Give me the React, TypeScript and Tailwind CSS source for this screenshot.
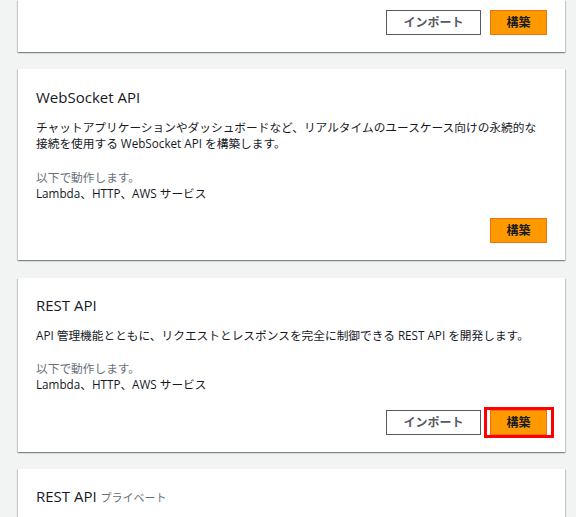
import React from "react";

const font = { fontFamily: '"Open Sans", "Noto Sans CJK JP", sans-serif' };
const cardShadow =
  "bg-white shadow-[0_1px_1px_0_rgba(0,28,36,0.3),1px_1px_1px_0_rgba(0,28,36,0.15),-1px_1px_1px_0_rgba(0,28,36,0.15)]";

function ImportBtn() {
  return (
    <button className="block h-[25px] w-[95px] border border-[#545b64] bg-white text-[12px] font-bold leading-none text-[#545b64]">
      インポート
    </button>
  );
}

function BuildBtn({ highlight }: { highlight?: boolean }) {
  return (
    <div className="relative flex">
      <button className="block h-[25px] w-[57px] border border-[#ec7211] bg-[#ff9900] text-[12px] font-bold leading-none text-[#16191f]">
        構築
      </button>
      {highlight && (
        <div className="pointer-events-none absolute -top-[3px] -bottom-[3px] -left-[6px] -right-[7px] border-[3px] border-[#ff0000]" />
      )}
    </div>
  );
}

function Card({
  title,
  desc,
  showImport,
  highlight,
  first,
}: {
  title: string;
  desc: string[];
  showImport?: boolean;
  highlight?: boolean;
  first?: boolean;
}) {
  return (
    <div className={`${cardShadow} px-[18px] pb-[17px] ${first ? "pt-[18px]" : "mt-px pt-[17px]"}`}>
      <div className="h-[20px] text-[15px] leading-[20px] text-[#16191f]">{title}</div>
      <div className="mt-[12px] text-[11.7px] leading-[16px] text-[#16191f]">
        {desc.map((d, i) => (
          <div key={i}>{d}</div>
        ))}
      </div>
      <div className={`text-[11.7px] leading-[16px] ${first ? "mt-[18px]" : "mt-[17px]"}`}>
        <div className="text-[#687078]">以下で動作します。</div>
        <div className="text-[#16191f]">Lambda、HTTP、AWS サービス</div>
      </div>
      <div className={`flex justify-end gap-[9px] ${first ? "mt-[17px]" : "mt-[18px]"}`}>
        {showImport && <ImportBtn />}
        <BuildBtn highlight={highlight} />
      </div>
    </div>
  );
}

export default function App() {
  return (
    <div className="h-[517px] w-[576px] overflow-hidden bg-[#f2f3f3]" style={font}>
      <div className="flex flex-col gap-[17px] pl-[18px] pr-[11px]">
        <div className={`${cardShadow} px-[18px] pt-[10px] pb-[17px]`}>
          <div className="flex justify-end gap-[9px]">
            <ImportBtn />
            <BuildBtn />
          </div>
        </div>
        <Card
          first
          title="WebSocket API"
          desc={[
            "チャットアプリケーションやダッシュボードなど、リアルタイムのユースケース向けの永続的な",
            "接続を使用する WebSocket API を構築します。",
          ]}
        />
        <Card
          title="REST API"
          desc={["API 管理機能とともに、リクエストとレスポンスを完全に制御できる REST API を開発します。"]}
          showImport
          highlight
        />
        <div className={`${cardShadow} px-[18px] pt-[17px] pb-[40px]`}>
          <div className="h-[20px] text-[15px] leading-[20px] text-[#16191f]">
            REST API <span className="text-[11px] text-[#687078]">プライベート</span>
          </div>
        </div>
      </div>
    </div>
  );
}
